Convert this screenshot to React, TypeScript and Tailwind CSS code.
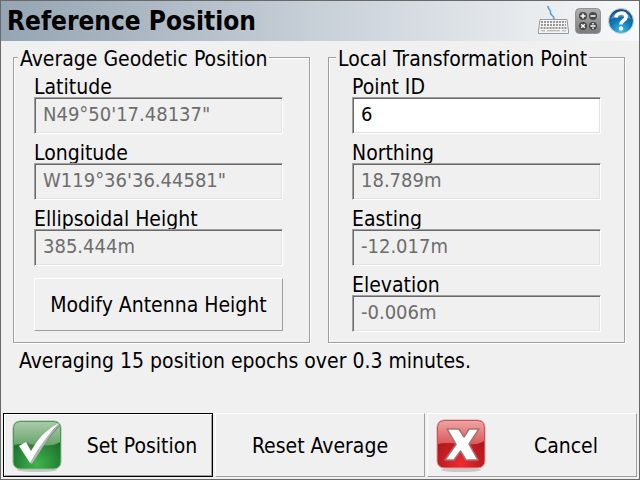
import type { ReactNode } from "react";

type FieldProps = {
  id: string;
  label: string;
  value: string;
  disabled?: boolean;
};

const averageFields: FieldProps[] = [
  { id: "latitude", label: "Latitude", value: "N49°50'17.48137\"", disabled: true },
  { id: "longitude", label: "Longitude", value: "W119°36'36.44581\"", disabled: true },
  { id: "height", label: "Ellipsoidal Height", value: "385.444m", disabled: true },
];

const localFields: FieldProps[] = [
  { id: "point-id", label: "Point ID", value: "6" },
  { id: "northing", label: "Northing", value: "18.789m", disabled: true },
  { id: "easting", label: "Easting", value: "-12.017m", disabled: true },
  { id: "elevation", label: "Elevation", value: "-0.006m", disabled: true },
];

function Field({ id, label, value, disabled }: FieldProps) {
  return (
    <div className="flex flex-col">
      <label htmlFor={id} className="h-7 pt-2 leading-5">
        {label}
      </label>
      <input
        id={id}
        type="text"
        defaultValue={value}
        disabled={disabled}
        className="h-[37px] w-full border border-t-[#a0a0a0] border-l-[#a0a0a0] border-r-white border-b-white bg-white px-2 pb-1 text-[20px] shadow-[inset_1px_1px_0_#696969,inset_-1px_-1px_0_#e3e3e3] outline-none disabled:bg-[#f0f0f0] disabled:text-[#6d6d6d]"
      />
    </div>
  );
}

function Group({ title, className, children }: { title: string; className: string; children: ReactNode }) {
  return (
    <fieldset
      className={`min-w-0 border border-[#a0a0a0] pb-[10px] shadow-[1px_1px_0_#fff,inset_1px_1px_0_#fff] ${className}`}
    >
      <legend className="-ml-4 bg-[#f0f0f0] px-0.5 pt-1 leading-5">{title}</legend>
      {children}
    </fieldset>
  );
}

function KeyboardIcon() {
  return (
    <svg viewBox="0 0 32 32" className="size-8" aria-hidden="true">
      <path d="M17 14C17 9 13 11 13.500 7.500S10.500 4.500 11 1" fill="none" stroke="#5b9fc4" strokeWidth="1.600" />
      <path d="M3 14.500H30L31.500 26V28.500H1.500V26Z" fill="#f4f4f4" stroke="#9a9a9a" />
      <path d="M4 17h25M4 20h25M3.500 23h26" stroke="#979797" strokeWidth="2" strokeDasharray="2 1" />
      <path d="M4 25.800h4M10 25.800h13M25 25.800h4" stroke="#a5a5a5" />
    </svg>
  );
}

function CalculatorIcon() {
  return (
    <svg viewBox="0 0 26 26" className="size-[26px]" aria-hidden="true">
      <defs>
        <linearGradient id="calc" x2="0" y2="1">
          <stop stopColor="#b0b0b0" />
          <stop offset="1" stopColor="#7a7a7a" />
        </linearGradient>
      </defs>
      <rect x="0.500" y="0.500" width="25" height="25" rx="4" fill="url(#calc)" stroke="#929292" />
      <g fill="#4a4a4a">
        <circle cx="8" cy="8" r="4" />
        <circle cx="18" cy="8" r="4" />
        <circle cx="8" cy="18" r="4" />
        <circle cx="18" cy="18" r="4" />
      </g>
      <path
        d="M5.500 8h5M8 5.500v5M15.500 8h5M6.200 16.200l3.600 3.600M9.800 16.200l-3.600 3.600M15.500 18h5M18 15v1.500M18 19.500v1.500"
        stroke="#fff"
        strokeWidth="1.500"
      />
    </svg>
  );
}

function HelpIcon() {
  return (
    <svg viewBox="0 0 28 28" className="size-7" aria-hidden="true">
      <defs>
        <radialGradient id="help" cx="0.500" cy="0.900" r="0.900">
          <stop stopColor="#35c3ee" />
          <stop offset="0.500" stopColor="#1377b4" />
          <stop offset="1" stopColor="#164a80" />
        </radialGradient>
      </defs>
      <circle cx="14" cy="14" r="12.500" fill="url(#help)" stroke="#c9d3db" />
      <path d="M4 12A10.500 10.500 0 0 1 24 12Q14 7 4 12" fill="#fff" opacity="0.300" />
      <path d="M9 10.500C9.500 4.500 19.500 4.500 19 10.200C18.800 13.500 14 13.500 14 17.500" fill="none" stroke="#fff" strokeWidth="3.600" />
      <circle cx="14" cy="21.500" r="2.200" fill="#fff" />
    </svg>
  );
}

function AcceptIcon() {
  return (
    <svg viewBox="0 0 54 56" className="h-14 w-[54px]" aria-hidden="true">
      <defs>
        <radialGradient id="ok" cx="0.500" cy="0.900" r="0.700">
          <stop stopColor="#3fb54a" />
          <stop offset="1" stopColor="#18662a" />
        </radialGradient>
        <linearGradient id="okGloss" x2="0" y2="1">
          <stop stopColor="#a9cba9" />
          <stop offset="1" stopColor="#67a468" />
        </linearGradient>
      </defs>
      <ellipse cx="27" cy="53" rx="20" ry="2" fill="#c9c9c9" />
      <rect x="3" y="4" width="48" height="48" rx="7" fill="url(#ok)" stroke="#8fbf91" />
      <path d="M4 28V11Q4 5 10 5H44Q50 5 50 11V25Q43 30 27 28Q12 26 4 28" fill="url(#okGloss)" />
      <path d="M13 28L18 25L23 34Q33 15 51 8Q36 22 22 47L20 46Z" fill="#666" opacity="0.700" />
      <path d="M34 23Q40 14 51 7Q42 15 36 25L22 47L20 46Z" fill="#b5b5b5" />
      <path d="M9 29L16 25L21 34Q31 15 49 6Q34 21 20 46Z" fill="#fff" />
    </svg>
  );
}

function CancelIcon() {
  return (
    <svg viewBox="0 0 54 56" className="h-14 w-[54px]" aria-hidden="true">
      <defs>
        <radialGradient id="no" cx="0.500" cy="0.900" r="0.700">
          <stop stopColor="#ee2a2f" />
          <stop offset="1" stopColor="#a3131a" />
        </radialGradient>
        <linearGradient id="noGloss" x2="0" y2="1">
          <stop stopColor="#efa3a3" />
          <stop offset="1" stopColor="#dc5657" />
        </linearGradient>
      </defs>
      <ellipse cx="27" cy="53" rx="20" ry="2" fill="#c9c9c9" />
      <rect x="3" y="3" width="48" height="48" rx="7" fill="url(#no)" stroke="#e39a9a" />
      <path d="M4 27V10Q4 4 10 4H44Q50 4 50 10V24Q43 29 27 27Q12 25 4 27" fill="url(#noGloss)" />
      <path
        d="M13 12H25L30 20L35 12H45L35 27L44 43H32L26.500 34L20 43H11L22 27.500Z"
        fill="#fff"
        stroke="#a87070"
        strokeWidth="1.500"
        strokeLinejoin="round"
      />
    </svg>
  );
}

const raised = "border border-t-white border-l-white border-r-[#a0a0a0] border-b-[#a0a0a0]";

export default function App() {
  return (
    <div className="flex min-h-screen flex-col border border-[#696969] bg-[#f0f0f0] font-['DejaVu_Sans_Condensed','DejaVu_Sans',sans-serif] text-[21px] text-black">
      <header className="flex h-10 items-center justify-between bg-linear-to-r from-[#95a5b3] via-[#c8d0d8] to-[#f8f9fa] pr-1 pl-1.5">
        <h1 className="text-[26px] leading-10 font-bold">Reference Position</h1>
        <div className="flex items-center gap-1.5">
          <button type="button" aria-label="Keyboard">
            <KeyboardIcon />
          </button>
          <button type="button" aria-label="Calculator">
            <CalculatorIcon />
          </button>
          <button type="button" aria-label="Help">
            <HelpIcon />
          </button>
        </div>
      </header>

      <main className="flex-1 pt-1 pr-[14px] pl-3">
        <div className="grid grid-cols-2 gap-[18px]">
          <Group title="Average Geodetic Position" className="pr-[26px] pl-5">
            <div className="flex flex-col gap-px">
              {averageFields.map((f) => (
                <Field key={f.id} {...f} />
              ))}
            </div>
            <button type="button" className={`mt-3 h-[53px] w-full pt-0.5 ${raised}`}>
              Modify Antenna Height
            </button>
          </Group>
          <Group title="Local Transformation Point" className="px-[23px]">
            <div className="flex flex-col gap-px">
              {localFields.map((f) => (
                <Field key={f.id} {...f} />
              ))}
            </div>
          </Group>
        </div>
        <p className="mt-1 pl-1.5 leading-7">Averaging 15 position epochs over 0.3 minutes.</p>
      </main>

      <footer className="grid grid-cols-3 gap-0.5 p-0.5">
        <button
          type="button"
          className="flex h-16 items-center border border-black pl-1.5 shadow-[inset_1px_1px_0_#fff,inset_-1px_-1px_0_#a0a0a0]"
        >
          <AcceptIcon />
          <span className="flex-1 pt-1 pl-2">Set Position</span>
        </button>
        <button type="button" className={`h-16 pt-1 ${raised}`}>
          Reset Average
        </button>
        <button type="button" className={`flex h-16 items-center pl-1.5 ${raised}`}>
          <CancelIcon />
          <span className="flex-1 pt-1 pl-2">Cancel</span>
        </button>
      </footer>
    </div>
  );
}
